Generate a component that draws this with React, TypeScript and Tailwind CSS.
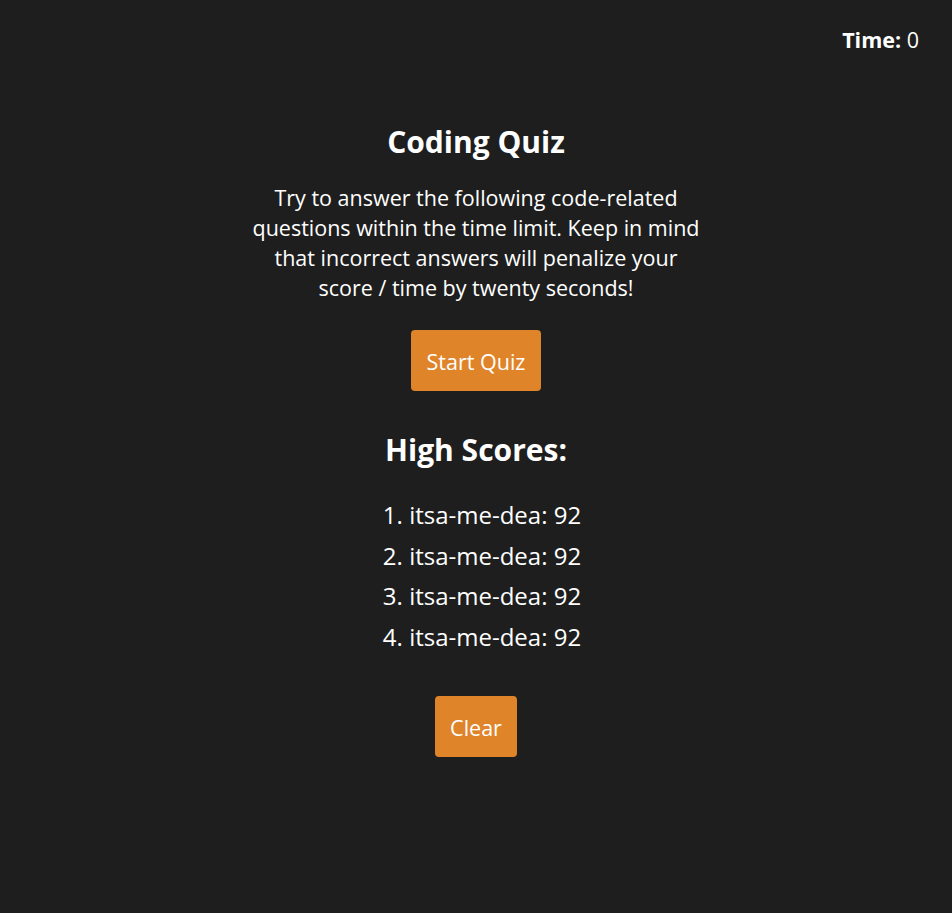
export default function App() {
  const scores = [
    { name: "itsa-me-dea", score: 92 },
    { name: "itsa-me-dea", score: 92 },
    { name: "itsa-me-dea", score: 92 },
    { name: "itsa-me-dea", score: 92 },
  ];

  return (
    <div className="min-h-screen bg-[#1e1e1e] text-white font-['Open_Sans',sans-serif]">
      {/* Timer */}
      <header className="flex justify-end pt-[26px] pr-[33px]">
        <p className="text-[21.5px] leading-[27px]">
          <span className="font-bold">Time:</span> 0
        </p>
      </header>

      <main className="flex flex-col items-center text-center">
        <h1 className="mt-[70px] text-[30px] leading-[38px] font-bold">Coding Quiz</h1>
        <p className="mt-[22px] max-w-[456px] text-[21.5px] leading-[30px]">
          Try to answer the following code-related questions within the time limit. Keep in mind
          that incorrect answers will penalize your score / time by twenty seconds!
        </p>
        <button className="mt-[27px] w-[130px] h-[61px] pt-[3px] rounded bg-[#e0842a] text-[21.5px]">
          Start Quiz
        </button>

        <h2 className="mt-[40px] text-[30px] leading-[38px] font-bold">High Scores:</h2>
        <ol className="mt-[26px] pl-3">
          {scores.map((s, i) => (
            <li key={i} className="text-[24px] leading-[40.67px]">
              {i + 1}. {s.name}: {s.score}
            </li>
          ))}
        </ol>

        <button className="mt-[38px] w-[82px] h-[61px] pt-[3px] rounded bg-[#e0842a] text-[21.5px]">
          Clear
        </button>
      </main>
    </div>
  );
}
